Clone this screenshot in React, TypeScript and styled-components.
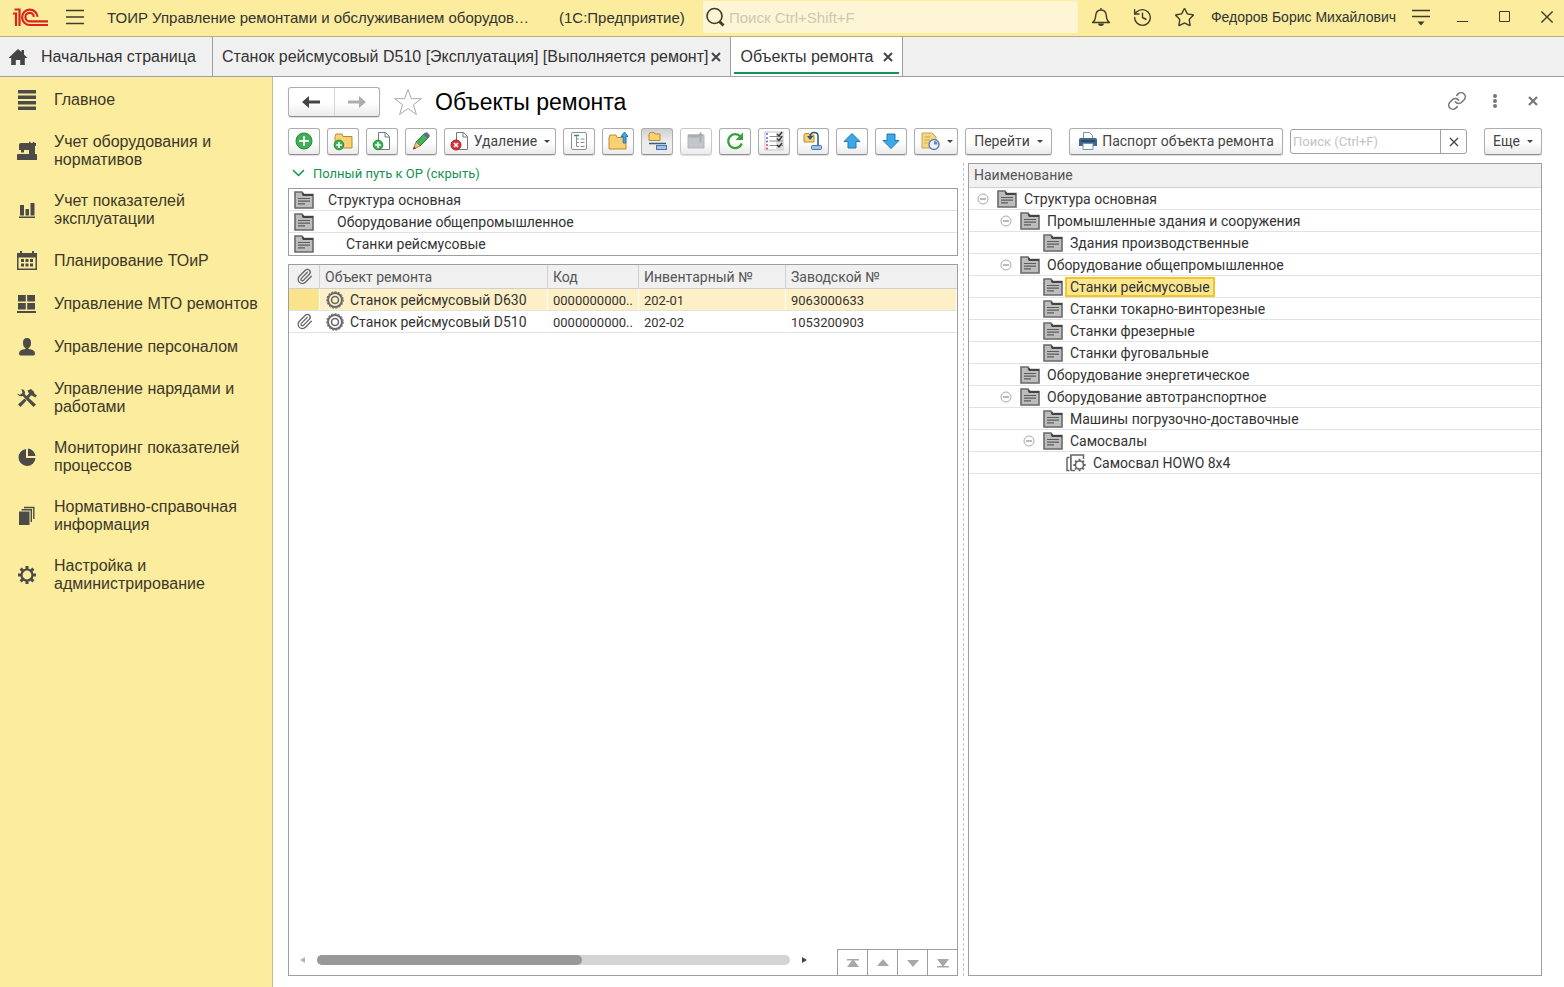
import React from 'react';
import styled, { createGlobalStyle, css } from 'styled-components';
import { History, Link, Paperclip, Star } from 'lucide-react';

const UI_FONT = '"Liberation Sans", Arial, sans-serif';
const FORM_FONT = 'Roboto, "Liberation Sans", sans-serif';

const GlobalStyle = createGlobalStyle`
  *, *::before, *::after { box-sizing: border-box; }
  body { margin: 0; background: #fff; font-family: ${FORM_FONT}; font-size: 14px; color: #333; }
  button, input { font: inherit; color: inherit; }
  button { cursor: pointer; }
  svg { display: block; flex: none; }
`;

/* ---------- shell ---------- */

const Shell = styled.div`
  display: flex;
  flex-direction: column;
  min-height: 100vh;
`;

const TitleBar = styled.header`
  display: flex;
  align-items: center;
  height: 37px;
  padding: 0 8px 2px 12px;
  background: #fbec9e;
  border-bottom: 1px solid #b9ae75;
  font-family: ${UI_FONT};
  font-size: 15px;
`;

const PlainButton = styled.button`
  display: flex;
  align-items: center;
  justify-content: center;
  flex: none;
  width: 18px;
  height: 24px;
  padding: 0;
  border: 0;
  background: none;
  color: #3f3c2c;
`;

const MenuButton = styled(PlainButton)`
  margin: 0 23px 0 18px;
`;

const AppTitle = styled.div`
  flex: none;
  width: 452px;
  white-space: nowrap;
  overflow: hidden;
`;

const Platform = styled.div`
  flex: none;
  width: 144px;
  white-space: nowrap;
`;

const GlobalSearch = styled.label`
  display: flex;
  align-items: center;
  flex: 1;
  min-width: 120px;
  height: 32px;
  padding-left: 2px;
  gap: 4px;
  background: #fdf5d4;
  border-radius: 2px;
  color: #3f3c2c;

  input {
    flex: 1;
    min-width: 0;
    padding: 0;
    border: 0;
    outline: 0;
    background: none;
  }
  input::placeholder { color: #cdc8b4; opacity: 1; }
`;

const IconGroup = styled.div`
  display: flex;
  gap: 24px;
`;

const SearchIcons = styled(IconGroup)`
  margin-left: 14px;
`;

const UserName = styled.div`
  margin: 0 16px 0 17px;
  font-size: 14px;
  white-space: nowrap;
`;

const TabBar = styled.nav`
  display: flex;
  height: 40px;
  background: #f0f0f0;
  border-bottom: 1px solid #a0a0a0;
  font-family: ${UI_FONT};
  font-size: 16px;
`;

const Tab = styled.div<{ $active?: boolean; $gap: number }>`
  display: flex;
  align-items: center;
  gap: ${(p) => p.$gap}px;
  padding: 0 9px;
  border-right: 1px solid #a0a0a0;
  white-space: nowrap;
  ${(p) =>
    p.$active &&
    css`
      background:
        linear-gradient(#0f9557, #0f9557) center bottom 2px / calc(100% - 6px) 2px no-repeat,
        #fff;
    `}
`;

const HomeTab = styled(Tab)`
  width: 213px;
  padding-left: 8px;
`;

const TabLabel = styled.button`
  padding: 0;
  border: 0;
  background: none;
`;

const TabClose = styled(PlainButton)`
  width: 10px;
  color: #444;
`;

const Body = styled.div`
  display: flex;
  flex: 1;
`;

const Sidebar = styled.aside`
  flex: none;
  width: 273px;
  padding-top: 2px;
  background: #fbec9e;
  border-right: 1px solid #c4bd8c;
  font-family: ${UI_FONT};
`;

const Section = styled.a`
  display: flex;
  align-items: center;
  min-height: 43px;
  gap: 17px;
  padding: 11px 8px 12px 17px;
  font-size: 16px;
  line-height: 18px;
  color: #3b3829;
  text-decoration: none;

  svg { fill: #4d4b48; }
`;

/* ---------- form ---------- */

const Form = styled.main`
  display: flex;
  flex-direction: column;
  flex: 1;
  min-width: 0;
  padding: 10px 22px 11px 15px;
`;

const FormHead = styled.div`
  display: flex;
  align-items: center;
  height: 30px;
  margin-bottom: 11px;
`;

const buttonFace = css`
  border: 1px solid #adadad;
  border-bottom-color: #8f8f8f;
  border-radius: 3px;
  background: linear-gradient(#fff 50%, #ebebeb);
  box-shadow: 0 1px 1px rgba(0, 0, 0, 0.14);
`;

const NavPair = styled.div`
  display: flex;
  width: 92px;
  height: 30px;
  ${buttonFace}
`;

const NavButton = styled.button`
  display: flex;
  flex: 1;
  align-items: center;
  justify-content: center;
  padding: 0;
  border: 0;
  background: none;

  & + & { border-left: 1px solid #d5d5d5; }
`;

const Favourite = styled(PlainButton)`
  width: 30px;
  height: 30px;
  margin: 0 12px 0 13px;
`;

const Heading = styled.h1`
  flex: 1;
  margin: 0;
  font-family: ${UI_FONT};
  font-size: 23px;
  font-weight: 400;
  color: #000;
`;

const HeadTools = styled.div`
  display: flex;
  align-items: center;
  gap: 20px;
  padding-bottom: 2px;

  button { color: #777; }
`;

const Toolbar = styled.div`
  display: flex;
  align-items: center;
  gap: 7px;
  height: 27px;
`;

const ToolButton = styled.button<{ $wide?: number; $pressed?: boolean }>`
  display: flex;
  align-items: center;
  justify-content: center;
  flex: none;
  gap: 4px;
  width: ${(p) => p.$wide ?? 32}px;
  height: 27px;
  padding: 0 0 1px;
  white-space: nowrap;
  color: #444;
  ${buttonFace}
  ${(p) =>
    p.$pressed &&
    css`
      background: linear-gradient(#d0d0d0, #ececec 50%);
    `}
  &:disabled { border-color: #c8c8c8; }
`;

const Spacer = styled.div`
  width: 3px;
`;

const FlexSpacer = styled.div`
  flex: 1;
  min-width: 3px;
`;

const Caret = styled.span`
  margin-left: 3px;
  border: 3px solid transparent;
  border-top-color: #444;
  border-bottom-width: 0;
`;

const FindBox = styled.div`
  display: flex;
  width: 177px;
  height: 25px;
  border: 1px solid #a0a0a0;
  border-radius: 3px;
  font-size: 13px;

  input {
    flex: 1;
    min-width: 0;
    padding: 0 2px;
    border: 0;
    outline: 0;
    background: none;
  }
  input::placeholder { color: #c3c3c3; opacity: 1; }
  button { width: 26px; height: 23px; border-left: 1px solid #a0a0a0; color: #444; }
`;

const Panels = styled.div`
  display: flex;
  flex: 1;
`;

const LeftPane = styled.section`
  display: flex;
  flex-direction: column;
  flex: 670 1 0;
  min-width: 0;
`;

const Splitter = styled.div`
  flex: none;
  width: 5px;
  margin: 8px 0 0 5px;
  border-left: 1px dashed #c4c4c4;
`;

const PathToggle = styled.button`
  display: flex;
  align-items: center;
  gap: 8px;
  height: 33px;
  padding: 3px 0 0 4px;
  border: 0;
  background: none;
  font-size: 13px;
  color: #12924f;
`;

const PathList = styled.ol`
  flex: none;
  margin: 0 0 8px;
  padding: 0;
  border: 1px solid #9e9e9e;
  list-style: none;
`;

const PathItem = styled.li<{ $level: number }>`
  display: flex;
  align-items: center;
  gap: ${(p) => 14 + p.$level * 9}px;
  height: 22px;
  padding-left: 5px;
  border-bottom: 1px solid #e2e2e2;
  &:last-child { border-bottom-color: transparent; }
`;

const ListBox = styled.div`
  display: flex;
  flex-direction: column;
  justify-content: space-between;
  flex: 1;
  border: 1px solid #9e9e9e;
`;

const Grid = styled.table`
  width: 100%;
  border-collapse: separate;
  border-spacing: 0;
  table-layout: fixed;

  th, td {
    padding: 0 5px;
    overflow: hidden;
    text-align: left;
    font-weight: 400;
    white-space: nowrap;
  }
  th {
    height: 24px;
    background: #f0f0f0;
    border-right: 1px solid #cfcfcf;
    border-bottom: 1px solid #cfcfcf;
    color: #555;
  }
  th:last-child { border-right: 0; }
  td {
    height: 22px;
    border-right: 1px solid #fff;
    border-bottom: 1px solid #e2e2e2;
  }
  th svg, td svg { margin: 0 auto; }
`;

const GridRow = styled.tr<{ $selected?: boolean }>`
  ${(p) =>
    p.$selected &&
    css`
      td { background: #fdf0c6; }
      td:first-child { background: #fae38b; }
    `}
`;

const Col = styled.col<{ $width?: number }>`
  ${(p) => p.$width && `width: ${p.$width}px;`}
`;

const NameCell = styled.div`
  display: flex;
  align-items: center;
  gap: 5px;
  && svg { margin: 0; }
`;

const NumberText = styled.span`
  font-size: 13px;
`;

const GridFooter = styled.div`
  display: flex;
  align-items: center;
  height: 26px;
  padding-left: 10px;
`;

const ScrollTrack = styled.div`
  flex: 1;
  height: 10px;
  margin: 0 11px 4px;
  border-radius: 5px;
  background: #d4d4d4;
`;

const ScrollThumb = styled.div`
  width: 56%;
  height: 10px;
  border-radius: 5px;
  background: #989898;
`;

const ScrollArrow = styled(PlainButton)`
  width: 7px;
  height: 10px;
  margin-bottom: 4px;
`;

const PageButtons = styled.div`
  display: flex;
  align-self: stretch;
  margin-left: 29px;
  border-top: 1px solid #9e9e9e;

  button { width: 30px; height: 25px; border-left: 1px solid #9e9e9e; }
`;

const TreePane = styled.section`
  flex: 572 1 0;
  min-width: 0;
  margin-top: 8px;
  border: 1px solid #9e9e9e;
`;

const TreeHead = styled.div`
  height: 24px;
  padding-left: 5px;
  background: #f0f0f0;
  border-bottom: 1px solid #cfcfcf;
  line-height: 23px;
  color: #555;
`;

const Tree = styled.ul`
  margin: 0;
  padding: 0;
  list-style: none;
`;

const TreeItem = styled.li<{ $level: number }>`
  display: flex;
  align-items: center;
  height: 22px;
  padding-left: ${(p) => 8 + p.$level * 23}px;
  border-bottom: 1px solid #e2e2e2;
`;

const ToggleSlot = styled.span`
  flex: none;
  width: 20px;

  button { width: 12px; height: 12px; }
`;

const TreeLabel = styled.span<{ $selected?: boolean }>`
  margin-left: 2px;
  padding: 0 3px;
  border: 2px solid transparent;
  line-height: 16px;
  white-space: nowrap;
  ${(p) =>
    p.$selected &&
    css`
      border-color: #f4c624;
      background: #fce68f;
    `}
`;

/* ---------- drawings ---------- */

const Logo = () => (
  <svg width="36" height="20" viewBox="0 0 36 20" fill="none" stroke="#d8261c" strokeWidth="2.2">
    <path d="M1 6.500h3v12.500" />
    <path d="M2.500 2.500h5v16.500" />
    <path d="M25.500 9.800A7.700 7.700 0 1 0 17.700 18H36" />
    <path d="M21.800 9.800A4.200 4.200 0 1 0 17.700 14.300H36" />
  </svg>
);

const Burger = () => (
  <svg width="18" height="16" viewBox="0 0 18 16" stroke="currentColor" strokeWidth="1.500">
    <path d="M0 1.500h18M0 8h18M0 14.500h18" />
  </svg>
);

const Magnifier = () => (
  <svg width="20" height="20" viewBox="0 0 20 20" fill="none" stroke="currentColor">
    <circle cx="9.500" cy="9" r="7.500" strokeWidth="1.600" />
    <path d="M14.500 14.500l4 4" strokeWidth="2.800" />
  </svg>
);

const BellIcon = () => (
  <svg width="20" height="20" viewBox="0 0 20 20" fill="none" stroke="currentColor" strokeWidth="1.400">
    <path d="M10 1v2M1.500 15.500c3-2 3-4 3.200-7C5 5 7 3 10 3s5 2 5.300 5.500c.2 3 .2 5 3.200 7z" strokeLinejoin="round" />
    <path d="M7 16.500h6c-.3 1.800-1.500 2.500-3 2.500s-2.700-.7-3-2.500z" fill="currentColor" stroke="none" />
  </svg>
);

const ServiceIcon = () => (
  <svg width="18" height="17" viewBox="0 0 18 17" stroke="currentColor" strokeWidth="1.500">
    <path d="M0 1.500h18M0 7.500h18" />
    <path d="M5.500 12.500h7L9 16.500z" fill="currentColor" stroke="none" />
  </svg>
);

const Cross = ({ size = 10, weight = 1.6 }: { size?: number; weight?: number }) => (
  <svg width={size} height={size} viewBox="0 0 10 10" stroke="currentColor" strokeWidth={weight}>
    <path d="M1 1l8 8M9 1L1 9" />
  </svg>
);

const HomeIcon = () => (
  <svg width="20" height="16" viewBox="0 0 20 16" fill="#444">
    <path d="M10 0l3.500 3V1h2.500v4.500l3.500 3.500h-2.700v7h-4.600v-5H7.800v5H3.200V9H.5z" />
  </svg>
);

const Arrow = ({ back }: { back?: boolean }) => (
  <svg width="18" height="12" viewBox="0 0 18 12" fill={back ? '#444' : '#adadad'}>
    <path d={back ? 'M7 0v4.500h11v3H7V12L0 6z' : 'M11 0v4.500H0v3h11V12l7-6z'} />
  </svg>
);

const BigStar = () => (
  <svg width="30" height="28" viewBox="0 0 30 28" fill="#fff" stroke="#aaa">
    <path d="M15 1.500l3.400 9.200h10l-8 6 3 9.800-8.400-6-8.400 6 3-9.800-8-6h10z" />
  </svg>
);

const Folder = () => (
  <svg width="20" height="18" viewBox="0 0 20 18">
    <path d="M1 1h7l1.500 2.500H19V17H1z" fill="#bdbdbd" stroke="#6a6a6a" strokeWidth="1.600" />
    <path d="M8.500 2.200l1 1.800H19" stroke="#444" strokeWidth="2" fill="none" />
    <path d="M4 7.500h12M4 10.200h12M4 12.800h7" stroke="#5c5c5c" strokeWidth="1.200" />
  </svg>
);

const Disc = () => (
  <svg width="20" height="20" viewBox="0 0 20 20" fill="none" stroke="#686868">
    <circle cx="10" cy="10" r="7" strokeWidth="2" />
    <circle cx="10" cy="10" r="8.300" strokeWidth="1" strokeDasharray="2 1.500" />
    <circle cx="10" cy="10" r="3.500" strokeWidth="1.600" />
  </svg>
);

const TEETH = [0, 45, 90, 135, 180, 225, 270, 315];

const Machine = () => (
  <svg width="20" height="18" viewBox="0 0 20 18" fill="none" stroke="#666">
    <path d="M1 3.500v13h2.500M1 3.500h2.500M5 16.500V1h12.500v4M5 16.500h4M4.800 1v15.500" strokeWidth="1.500" />
    <circle cx="13.500" cy="11" r="4" strokeWidth="1.600" />
    {TEETH.map((a) => (
      <path key={a} d="M13.500 4.800v2" strokeWidth="2" transform={`rotate(${a} 13.500 11)`} />
    ))}
  </svg>
);

const Minus = () => (
  <svg width="12" height="12" viewBox="0 0 12 12" fill="#fff" stroke="#a8a8a8">
    <circle cx="6" cy="6" r="5" />
    <path d="M3 6h6" stroke="#777" />
  </svg>
);

const Triangle = ({ d, bar, color = '#a8a8a8' }: { d: string; bar?: string; color?: string }) => (
  <svg width="14" height="10" viewBox="0 0 14 10" fill={color}>
    <path d={d} />
    {bar && <path d={bar} />}
  </svg>
);

const Plus = ({ x, y, r }: { x: number; y: number; r: number }) => (
  <g>
    <circle cx={x} cy={y} r={r} fill="#3fb155" stroke="#238a3a" />
    <path
      d={`M${x - r * 0.6} ${y}h${r * 1.2}M${x} ${y - r * 0.6}v${r * 1.2}`}
      stroke="#fff"
      strokeWidth={r > 6 ? 2 : 1.6}
    />
  </g>
);

const YELLOW = { fill: '#f8d172', stroke: '#b88a2c' };
const BLUE = { fill: '#3ba8ea', stroke: '#2578b0' };
const SHEET = 'M6.500 1.500h7l4 4v13h-11z';

const tools = {
  add: <Plus x={10} y={10} r={8} />,
  addFolder: (
    <>
      <path d="M2 5.500l1-2.500h6l1 2.500h9V17H2z" {...YELLOW} />
      <Plus x={6} y={14} r={4.8} />
    </>
  ),
  copy: (
    <>
      <path d={SHEET} fill="#fff" stroke="#6f7a85" />
      <path d="M13 1.500v4.500h4.500" fill="none" stroke="#6f7a85" />
      <Plus x={6} y={14} r={4.8} />
    </>
  ),
  edit: (
    <>
      <path d="M5 11L13.500 2.500l4 4L9 15z" fill="#43b05c" stroke="#2c7c40" />
      <path d="M12.500 3.500l2-2q1-.8 2 .2l2 2q.8 1 0 1.800l-2 2z" fill="#5b6f7c" />
      <path d="M5 11l4 4-6.500 3z" fill="#f2c877" stroke="#b5832f" />
      <path d="M2 18.500l1-3 2 2z" fill="#444" />
    </>
  ),
  remove: (
    <>
      <path d={SHEET} fill="#fff" stroke="#6f7a85" />
      <path d="M13 1.500v4.500h4.500" fill="none" stroke="#6f7a85" />
      <circle cx="6" cy="14" r="5" fill="#d8313a" stroke="#a8202a" />
      <path d="M4 12l4 4M8 12l-4 4" stroke="#fff" strokeWidth="1.600" />
    </>
  ),
  outline: (
    <>
      <rect x="2.500" y="1.500" width="15" height="17" rx="1.500" fill="#fff" stroke="#8a8f94" />
      <path d="M5 4.500h5" stroke="#2e9a5a" strokeWidth="1.500" />
      <path d="M7.500 5v10.500M7.500 8h2.500M7.500 11.500h2.500M7.500 15.500h2.500M11.500 8h4M11.500 11.500h4M11.500 15.500h4" fill="none" stroke="#8a949c" />
    </>
  ),
  moveUp: (
    <>
      <path d="M1 6.500l1-2.500h6l1 2.500h9V18H1z" {...YELLOW} />
      <path d="M16.500 1L20 5.500h-2.200V12h-2.600V5.500H13z" {...BLUE} />
    </>
  ),
  hierarchy: (
    <>
      <path d="M2 3l1-1.500h4L8 3h5v6.500H2z" {...YELLOW} />
      <path d="M2 12.500h17" stroke="#3a5f7d" strokeWidth="1.500" />
      <rect x="9.500" y="14.500" width="10" height="4" fill="#9cc3f0" stroke="#4576ae" />
    </>
  ),
  moveOff: (
    <>
      <path d="M2 4h16v13H2z" fill="#c3c6c9" stroke="#b2b5b8" />
      <path d="M2 3.500h11v3H2z" fill="#a8acb0" />
      <path d="M14.500 1l3 4h-2v6h-2V5h-2z" fill="#a8acb0" />
    </>
  ),
  refresh: (
    <>
      <path d="M15.500 5.500A7 7 0 1 0 16.800 12.500" fill="none" stroke="#35a23b" strokeWidth="2.400" />
      <path d="M18 1.500v7.500h-7.500z" fill="#35a23b" />
    </>
  ),
  checks: (
    <>
      <rect x="1" y="1" width="18" height="18" fill="#fff" stroke="#c2c2c2" />
      <path d="M12 1h7v18h-7z" fill="#ddd" />
      <path d="M5.500 5.500h13.500M5.500 10h13.500M5.500 14.500h13.500" stroke="#8c8c8c" />
      <path d="M2 3h2M2 7h2M2 10.500h2" stroke="#6563d8" strokeWidth="1.500" />
      <path d="M2 14h2M2 17.500h2" stroke="#e0455a" strokeWidth="1.500" />
      <path d="M13 3l2 2 3-4M13 7.500l2 2 3-4M13 14l2 2 3-4" fill="none" stroke="#333" strokeWidth="1.400" />
    </>
  ),
  moveTo: (
    <>
      <path d="M1 4l1-1.500h4L7 4h4v7H1z" {...YELLOW} />
      <path d="M15 14.500V5q0-3.500-4-3.500-3.500 0-4 4" fill="none" stroke="#23587c" strokeWidth="1.500" />
      <path d="M4 5h6.500L7 9z" fill="#23587c" />
      <rect x="8.500" y="14.500" width="10" height="4" rx="1" fill="#9cc3f0" stroke="#4576ae" />
    </>
  ),
  up: <path d="M10 2.500l8 8h-4V17H6v-6.500H2z" {...BLUE} />,
  down: <path d="M10 17.500l8-8h-4V3H6v6.500H2z" {...BLUE} />,
  report: (
    <>
      <path d="M2 2h10l4 4v11H2z" fill="#f6d883" stroke="#c8a24a" />
      <path d="M4.500 6h6M4.500 9h5M4.500 12h3" stroke="#cda650" />
      <circle cx="14" cy="13.500" r="5" fill="#eef2fb" stroke="#6c7fa3" strokeWidth="1.500" />
      <path d="M14 10v3.500h3.500A3.500 3.500 0 0 0 14 10z" fill="#6a86c0" />
    </>
  ),
  print: (
    <>
      <path d="M5.500 8V1.500h6l3 3V8" fill="#fff" stroke="#7891a8" />
      <path d="M2.500 7h15q1.500 0 1.500 1.500V15H1V8.500Q1 7 2.500 7z" fill="#41698f" />
      <path d="M3 10h14" stroke="#24425e" strokeWidth="1.500" />
      <path d="M5 12.500h10v6H5z" fill="#fff" stroke="#7891a8" />
    </>
  ),
};

const ToolIcon = ({ name }: { name: keyof typeof tools }) => (
  <svg width="20" height="20" viewBox="0 0 20 20" fill="none">
    {tools[name]}
  </svg>
);

const sectionIcons: Record<string, React.ReactNode> = {
  main: <path d="M1 0h18v3.500H1zM1 5.500h18V9H1zM1 11h18v3.500H1zM1 16.500h18V20H1z" />,
  equipment: <path d="M2 4q0-2 2-2h8V.8h1.500V2h2.300V1h1.500v1H19v3h-1v8h1q1 0 1 1v5H0v-5q0-1 1-1h11V9H7v2.500H4V9H2z" />,
  metrics: <path d="M2 16.500h16V18H2zM3 5h4v10.500H3zM8.500 9h3.500v6.500H8.500zM13.500 3h4v12.500h-4z" />,
  planning: (
    <path
      fillRule="evenodd"
      d="M0 2h3V0h2v2h10V0h2v2h3v17H0zM1.500 6.500v11h17v-11zM4 8h3v3H4zM8.500 8h3v3h-3zM13 8h3v3h-3zM4 12.500h3v3H4zM8.500 12.500h3v3h-3zM13 12.500h3v3h-3z"
    />
  ),
  supply: <path d="M1 1h7.800v6.500H1zM10.200 1H18v6.500h-7.800zM1 9h7.800v6.500H1zM10.200 9H18v6.500h-7.800zM0 17h19v2H0z" />,
  staff: (
    <path d="M10 1q4 0 4 4.500 0 4.500-2.500 5.500v1q6.500.5 6.500 4.500 0 2-1.500 2h-13Q2 18.500 2 16.500q0-4 6.500-4.500v-1Q6 10 6 5.500 6 1 10 1z" />
  ),
  orders: (
    <>
      <path d="M4.500 1q3.500.5 3.500 4l-.3 1.200L19 16.500 16.500 19 5.800 8Q2 9 0 5.500l3 1.200L5.500 5z" />
      <path d="M10.500 2.500L14 1l3 2.800.3 1.700L20 7.500l-1.800 2-2.700-1.700-1.500-.3-2.500 2.700-2-2L12 5.500z" />
      <path d="M7.500 10.500l2 2L3.500 19 1 16.500z" />
    </>
  ),
  process: <path d="M9 2v9h9.500A8.500 8.500 0 1 1 9 2zM11 1.500A8.500 8.500 0 0 1 18.500 9H11z" />,
  reference: <path d="M2 5.500h10.500V19H2zM4.500 3h10.500v13h-1.400V4.400H4.500zM7 .8h10.500V13h-1.400V2.200H7z" />,
};

const GearRing = styled.circle`
  fill: none;
  stroke: #4d4b48;
  stroke-width: 2.2;
`;

const SectionIcon = ({ name }: { name: string }) => (
  <svg width="20" height="20" viewBox="0 0 20 20">
    {name === 'settings' ? (
      <>
        <GearRing cx="10" cy="10" r="5.500" />
        {TEETH.map((a) => (
          <path key={a} d="M8.500 1h3v3.500h-3z" transform={`rotate(${a} 10 10)`} />
        ))}
      </>
    ) : (
      sectionIcons[name]
    )}
  </svg>
);

/* ---------- data ---------- */

const sections = [
  ['main', 'Главное'],
  ['equipment', 'Учет оборудования и нормативов'],
  ['metrics', 'Учет показателей эксплуатации'],
  ['planning', 'Планирование ТОиР'],
  ['supply', 'Управление МТО ремонтов'],
  ['staff', 'Управление персоналом'],
  ['orders', 'Управление нарядами и работами'],
  ['process', 'Мониторинг показателей процессов'],
  ['reference', 'Нормативно-справочная информация'],
  ['settings', 'Настройка и администрирование'],
];

const path = ['Структура основная', 'Оборудование общепромышленное', 'Станки рейсмусовые'];

const objects = [
  { name: 'Станок рейсмусовый D630', inv: '202-01', serial: '9063000633', selected: true },
  { name: 'Станок рейсмусовый D510', inv: '202-02', serial: '1053200903', file: true },
];

type Node = { level: number; name: string; open?: boolean; selected?: boolean; machine?: boolean };

const tree: Node[] = [
  { level: 0, name: 'Структура основная', open: true },
  { level: 1, name: 'Промышленные здания и сооружения', open: true },
  { level: 2, name: 'Здания производственные' },
  { level: 1, name: 'Оборудование общепромышленное', open: true },
  { level: 2, name: 'Станки рейсмусовые', selected: true },
  { level: 2, name: 'Станки токарно-винторезные' },
  { level: 2, name: 'Станки фрезерные' },
  { level: 2, name: 'Станки фуговальные' },
  { level: 1, name: 'Оборудование энергетическое' },
  { level: 1, name: 'Оборудование автотранспортное', open: true },
  { level: 2, name: 'Машины погрузочно-доставочные' },
  { level: 2, name: 'Самосвалы', open: true },
  { level: 3, name: 'Самосвал HOWO 8x4', machine: true },
];

/* ---------- page ---------- */

const Clip = () => <Paperclip size={17} color="#666" strokeWidth={1.8} />;

function Header() {
  return (
    <TitleBar>
      <Logo />
      <MenuButton aria-label="Меню"><Burger /></MenuButton>
      <AppTitle>ТОИР Управление ремонтами и обслуживанием оборудов…</AppTitle>
      <Platform>(1С:Предприятие)</Platform>
      <GlobalSearch>
        <Magnifier />
        <input aria-label="Поиск" placeholder="Поиск Ctrl+Shift+F" />
      </GlobalSearch>
      <SearchIcons>
        <PlainButton aria-label="Уведомления"><BellIcon /></PlainButton>
        <PlainButton aria-label="История"><History size={21} strokeWidth={1.6} /></PlainButton>
        <PlainButton aria-label="Избранное"><Star size={21} strokeWidth={1.6} /></PlainButton>
      </SearchIcons>
      <UserName>Федоров Борис Михайлович</UserName>
      <IconGroup>
        <PlainButton aria-label="Сервис"><ServiceIcon /></PlainButton>
        <PlainButton aria-label="Свернуть">
          <svg width="12" height="12" viewBox="0 0 12 12"><path d="M0 10.500h11" stroke="currentColor" /></svg>
        </PlainButton>
        <PlainButton aria-label="Развернуть">
          <svg width="12" height="12" viewBox="0 0 12 12"><path d="M.5.5h10v10H.5z" fill="none" stroke="currentColor" /></svg>
        </PlainButton>
        <PlainButton aria-label="Закрыть"><Cross size={14} weight={1} /></PlainButton>
      </IconGroup>
    </TitleBar>
  );
}

function Tabs() {
  return (
    <TabBar>
      <HomeTab $gap={13}>
        <HomeIcon />
        <TabLabel>Начальная страница</TabLabel>
      </HomeTab>
      <Tab $gap={3}>
        <TabLabel>Станок рейсмусовый D510 [Эксплуатация] [Выполняется ремонт]</TabLabel>
        <TabClose aria-label="Закрыть вкладку"><Cross weight={2} /></TabClose>
      </Tab>
      <Tab $gap={10} $active>
        <TabLabel>Объекты ремонта</TabLabel>
        <TabClose aria-label="Закрыть вкладку"><Cross weight={2} /></TabClose>
      </Tab>
    </TabBar>
  );
}

function Commands() {
  return (
    <Toolbar>
      <ToolButton aria-label="Создать"><ToolIcon name="add" /></ToolButton>
      <ToolButton aria-label="Создать группу"><ToolIcon name="addFolder" /></ToolButton>
      <ToolButton aria-label="Скопировать"><ToolIcon name="copy" /></ToolButton>
      <ToolButton aria-label="Изменить"><ToolIcon name="edit" /></ToolButton>
      <ToolButton $wide={112}><ToolIcon name="remove" />Удаление<Caret /></ToolButton>
      <ToolButton aria-label="Структура"><ToolIcon name="outline" /></ToolButton>
      <ToolButton aria-label="Переместить в группу"><ToolIcon name="moveUp" /></ToolButton>
      <ToolButton aria-label="Иерархия" $pressed><ToolIcon name="hierarchy" /></ToolButton>
      <ToolButton aria-label="На уровень вверх" disabled><ToolIcon name="moveOff" /></ToolButton>
      <ToolButton aria-label="Обновить"><ToolIcon name="refresh" /></ToolButton>
      <ToolButton aria-label="Отметки"><ToolIcon name="checks" /></ToolButton>
      <ToolButton aria-label="Перенести"><ToolIcon name="moveTo" /></ToolButton>
      <ToolButton aria-label="Вверх"><ToolIcon name="up" /></ToolButton>
      <ToolButton aria-label="Вниз"><ToolIcon name="down" /></ToolButton>
      <ToolButton aria-label="Отчеты" $wide={44}><ToolIcon name="report" /><Caret /></ToolButton>
      <ToolButton $wide={87}>Перейти<Caret /></ToolButton>
      <Spacer />
      <ToolButton $wide={214}><ToolIcon name="print" />Паспорт объекта ремонта</ToolButton>
      <FindBox>
        <input aria-label="Поиск по списку" placeholder="Поиск (Ctrl+F)" />
        <PlainButton aria-label="Очистить"><Cross weight={1.3} /></PlainButton>
      </FindBox>
      <FlexSpacer />
      <ToolButton $wide={58}>Еще<Caret /></ToolButton>
    </Toolbar>
  );
}

function ObjectsGrid() {
  return (
    <ListBox>
      <Grid>
        <colgroup>
          <Col $width={31} />
          <Col $width={228} />
          <Col $width={91} />
          <Col $width={147} />
          <Col />
        </colgroup>
        <thead>
          <tr>
            <th aria-label="Файлы"><Clip /></th>
            <th>Объект ремонта</th>
            <th>Код</th>
            <th>Инвентарный №</th>
            <th>Заводской №</th>
          </tr>
        </thead>
        <tbody>
          {objects.map((o) => (
            <GridRow key={o.serial} $selected={o.selected}>
              <td>{o.file && <Clip />}</td>
              <td><NameCell><Disc />{o.name}</NameCell></td>
              <td><NumberText>0000000000..</NumberText></td>
              <td><NumberText>{o.inv}</NumberText></td>
              <td><NumberText>{o.serial}</NumberText></td>
            </GridRow>
          ))}
        </tbody>
      </Grid>
      <GridFooter>
        <ScrollArrow aria-label="Влево">
          <svg width="5" height="6" viewBox="0 0 5 6"><path d="M5 0v6L0 3z" fill="#b5b5b5" /></svg>
        </ScrollArrow>
        <ScrollTrack><ScrollThumb /></ScrollTrack>
        <ScrollArrow aria-label="Вправо">
          <svg width="5" height="6" viewBox="0 0 5 6"><path d="M0 0v6l5-3z" fill="#444" /></svg>
        </ScrollArrow>
        <PageButtons>
          <PlainButton aria-label="В начало"><Triangle d="M7 1l6 8H1z" bar="M1 1h12v1.500H1z" /></PlainButton>
          <PlainButton aria-label="Назад"><Triangle d="M7 1l6 7H1z" /></PlainButton>
          <PlainButton aria-label="Вперед"><Triangle d="M7 9L1 2h12z" /></PlainButton>
          <PlainButton aria-label="В конец"><Triangle d="M7 9L1 1h12z" bar="M1 8h12v1.500H1z" /></PlainButton>
        </PageButtons>
      </GridFooter>
    </ListBox>
  );
}

function StructureTree() {
  return (
    <TreePane>
      <TreeHead>Наименование</TreeHead>
      <Tree role="tree" aria-label="Наименование">
        {tree.map((n) => (
          <TreeItem key={n.name} role="treeitem" aria-level={n.level + 1} aria-selected={!!n.selected} $level={n.level}>
            <ToggleSlot>
              {n.open && <PlainButton aria-label="Свернуть группу"><Minus /></PlainButton>}
            </ToggleSlot>
            {n.machine ? <Machine /> : <Folder />}
            <TreeLabel $selected={n.selected}>{n.name}</TreeLabel>
          </TreeItem>
        ))}
      </Tree>
    </TreePane>
  );
}

export default function App() {
  return (
    <Shell>
      <GlobalStyle />
      <Header />
      <Tabs />
      <Body>
        <Sidebar>
          {sections.map(([icon, label]) => (
            <Section key={icon} href={`#${icon}`}>
              <SectionIcon name={icon} />
              <span>{label}</span>
            </Section>
          ))}
        </Sidebar>
        <Form>
          <FormHead>
            <NavPair>
              <NavButton aria-label="Назад"><Arrow back /></NavButton>
              <NavButton aria-label="Вперед"><Arrow /></NavButton>
            </NavPair>
            <Favourite aria-label="В избранное"><BigStar /></Favourite>
            <Heading>Объекты ремонта</Heading>
            <HeadTools>
              <PlainButton aria-label="Ссылка"><Link size={20} strokeWidth={1.9} /></PlainButton>
              <PlainButton aria-label="Еще">
                <svg width="4" height="14" viewBox="0 0 4 14" fill="#777">
                  <circle cx="2" cy="2" r="2" /><circle cx="2" cy="7" r="2" /><circle cx="2" cy="12" r="2" />
                </svg>
              </PlainButton>
              <PlainButton aria-label="Закрыть форму"><Cross weight={2.2} /></PlainButton>
            </HeadTools>
          </FormHead>
          <Commands />
          <Panels>
            <LeftPane>
              <PathToggle>
                <svg width="13" height="8" viewBox="0 0 13 8" fill="none" stroke="#12924f" strokeWidth="1.500">
                  <path d="M1 1l5.500 5.500L12 1" />
                </svg>
                Полный путь к ОР (скрыть)
              </PathToggle>
              <PathList>
                {path.map((name, i) => (
                  <PathItem key={name} $level={i}><Folder />{name}</PathItem>
                ))}
              </PathList>
              <ObjectsGrid />
            </LeftPane>
            <Splitter />
            <StructureTree />
          </Panels>
        </Form>
      </Body>
    </Shell>
  );
}
